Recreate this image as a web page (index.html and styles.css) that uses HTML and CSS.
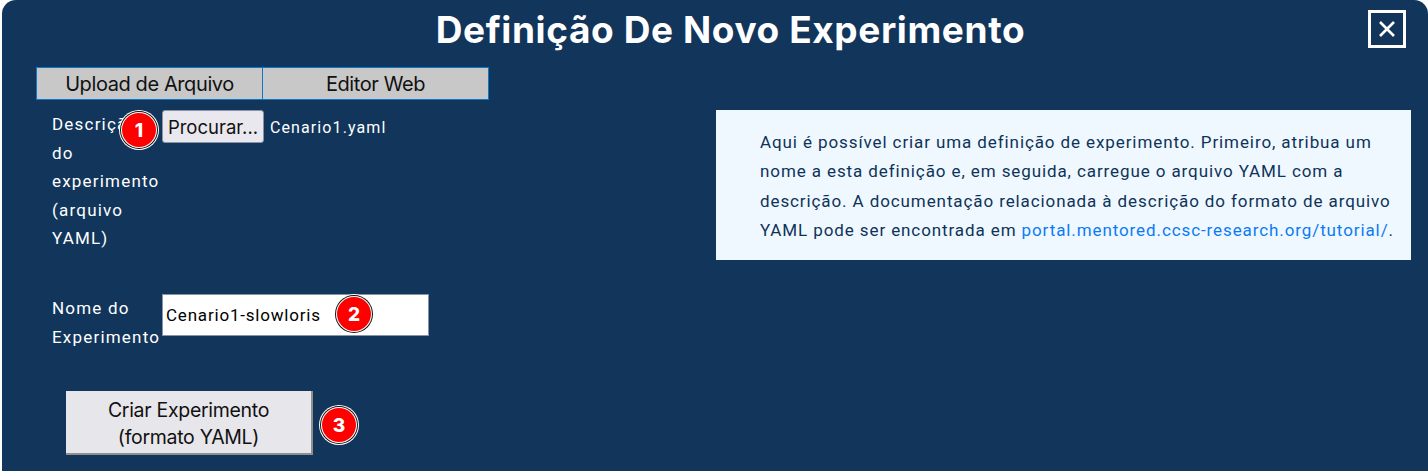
FILE: index.html
```html
<!DOCTYPE html>
<html lang="pt-BR">
<head>
  <meta charset="UTF-8" />
  <meta name="viewport" content="width=device-width, initial-scale=1.0" />
  <title>Definição De Novo Experimento</title>
  <link rel="stylesheet" href="styles.css">
</head>
<body>
  <div class="modal">
    <header class="modal-head">
      <h1>Definição De Novo Experimento</h1>
      <button class="close" type="button" aria-label="Fechar">
        <svg width="18" height="18" viewBox="0 0 18 18"><path d="M2 2 L16 16 M16 2 L2 16" stroke="#fff" stroke-width="2.6" fill="none"/></svg>
      </button>
    </header>

    <div class="tabs">
      <button class="tab" type="button">Upload de Arquivo</button>
      <button class="tab" type="button">Editor Web</button>
    </div>

    <div class="content">
      <form class="form">
        <div class="row row-file">
          <label class="label">Descrição do experimento (arquivo YAML)</label>
          <div class="file">
            <button class="browse" type="button">Procurar...</button>
            <span class="file-name">Cenario1.yaml</span>
          </div>
          <span class="badge badge-1">1</span>
        </div>

        <div class="row row-name">
          <label class="label" for="name">Nome do Experimento</label>
          <input class="name-input" id="name" type="text" value="Cenario1-slowloris">
          <span class="badge badge-2">2</span>
        </div>

        <div class="submit-row">
          <button class="submit" type="button">Criar Experimento<br>(formato YAML)</button>
          <span class="badge badge-3">3</span>
        </div>
      </form>

      <aside class="info">
        Aqui é possível criar uma definição de experimento. Primeiro, atribua um nome a esta definição e, em seguida, carregue o arquivo YAML com a descrição. A documentação relacionada à descrição do formato de arquivo YAML pode ser encontrada em <a href="#">portal.mentored.ccsc-research.org/tutorial/</a>.
      </aside>
    </div>
  </div>
</body>
</html>
```

FILE: styles.css
```css
html, body {
  height: 100%;
}
body {
  margin: 0;
  background: #fff;
  overflow: hidden;
  font-family: "Roboto", "Liberation Sans", sans-serif;
}
.modal {
  box-sizing: border-box;
  height: 471px;
  margin-left: 2px;
  padding: 0 17px 0 34px;
  background: #12355b;
  border-radius: 14px 14px 0 0;
  color: #fff;
}
.modal-head {
  position: relative;
  height: 67px;
}
.modal-head h1 {
  margin: 0;
  padding-top: 9px;
  padding-left: 14px;
  text-align: center;
  font-family: "Inter", sans-serif;
  font-size: 37px;
  line-height: 42px;
  font-weight: 700;
  letter-spacing: 0.6px;
}
.close {
  position: absolute;
  top: 10px;
  right: 5px;
  display: flex;
  align-items: center;
  justify-content: center;
  box-sizing: border-box;
  width: 38px;
  height: 38px;
  padding: 0;
  background: transparent;
  border: 3px solid #fff;
}
.tabs {
  display: flex;
  width: 453px;
}
.tab {
  box-sizing: border-box;
  width: 227px;
  height: 33px;
  padding: 0;
  background: #c8c8c8;
  border: 1px solid #0d78c8;
  font-family: "Inter", sans-serif;
  font-size: 20px;
  letter-spacing: -0.4px;
  color: #111;
}
.tab + .tab {
  margin-left: -1px;
}
.content {
  display: flex;
  justify-content: space-between;
  align-items: flex-start;
}
.form {
  width: 460px;
}
.row {
  position: relative;
  display: flex;
  align-items: flex-start;
}
.label {
  box-sizing: content-box;
  width: 110px;
  padding-left: 16px;
  font-size: 17px;
  line-height: 28.6px;
  letter-spacing: 1.2px;
}
.row-file {
  padding-top: 10px;
  height: 150px;
}
.file {
  display: flex;
  align-items: center;
}
.browse {
  box-sizing: border-box;
  width: 102px;
  height: 33px;
  padding: 0;
  background: #e9e8ee;
  border: 1px solid #8a93a5;
  border-radius: 3px;
  font-family: "Inter", sans-serif;
  font-size: 18.5px;
  color: #111;
}
.file-name {
  margin-left: 6px;
  padding-top: 2px;
  font-size: 16px;
  letter-spacing: 1.1px;
}
.row-name {
  margin-top: 34px;
  height: 97px;
}
.name-input {
  box-sizing: border-box;
  width: 267px;
  height: 42px;
  padding: 0 3px;
  background: #fff;
  border: 1px solid #8a93a5;
  font-family: "Roboto", sans-serif;
  font-size: 17px;
  letter-spacing: 0.8px;
  color: #000;
}
.submit-row {
  position: relative;
  padding-left: 30px;
}
.submit {
  display: block;
  box-sizing: border-box;
  width: 247px;
  height: 64px;
  padding: 3px 0 0;
  background: #e7e6eb;
  border: 0;
  border-right: 2px solid #8f8f8f;
  border-bottom: 2px solid #8f8f8f;
  font-family: "Inter", sans-serif;
  font-size: 19.5px;
  line-height: 27px;
  letter-spacing: -0.3px;
  color: #111;
}
.badge {
  position: absolute;
  display: flex;
  align-items: center;
  justify-content: center;
  box-sizing: border-box;
  width: 34px;
  height: 34px;
  background: #f00;
  border-radius: 50%;
  box-shadow: 0 0 0 1px #fff, 0 0 0 2px #111, 0 0 0 3px #fff;
  font-family: "Inter", sans-serif;
  font-size: 19px;
  font-weight: 800;
  color: #fff;
}
.badge-1 {
  top: 13px;
  left: 86px;
}
.badge-2 {
  top: 3px;
  left: 301px;
}
.badge-3 {
  top: 17px;
  left: 286px;
}
.info {
  box-sizing: border-box;
  width: 695px;
  height: 150px;
  margin-top: 10px;
  padding: 18px 14px 0 44px;
  background: #f0f8ff;
  font-size: 17px;
  line-height: 29.3px;
  letter-spacing: 0.9px;
  color: #0e3358;
}
.info a {
  color: #0b7bf5;
  text-decoration: none;
}
```
